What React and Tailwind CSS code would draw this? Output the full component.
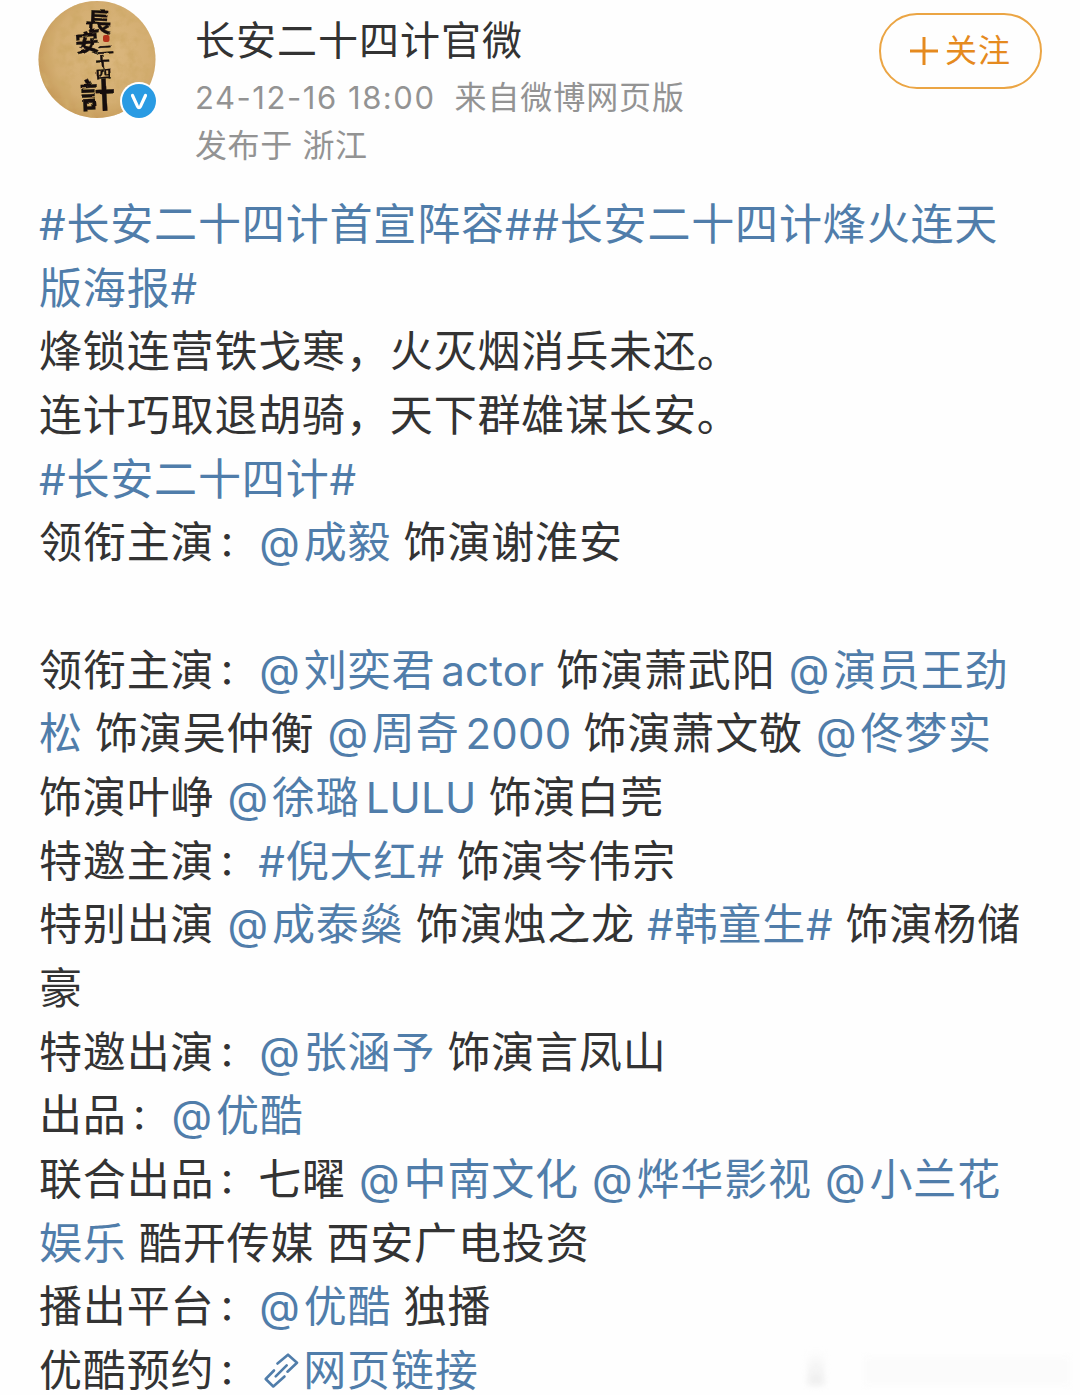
import React from "react";

const Avatar = () => {
  return (
    <div className="relative h-[118px] w-[118px] shrink-0">
      <svg viewBox="0 0 118 118" className="h-full w-full overflow-visible">
        <defs>
          <clipPath id="round">
            <circle cx="59" cy="59.5" r="58.5" />
          </clipPath>
          <radialGradient id="paper" cx="55%" cy="45%" r="60%">
            <stop offset="0" stopColor="#dcb981" />
            <stop offset="0.7" stopColor="#d4ae72" />
            <stop offset="1" stopColor="#c39654" />
          </radialGradient>
          {/* Parchment grain */}
          <filter id="grain" x="0" y="0" width="100%" height="100%">
            <feTurbulence type="fractalNoise" baseFrequency="0.09" numOctaves="5" seed="4" />
            <feColorMatrix values="0 0 0 0 0.62  0 0 0 0 0.4  0 0 0 0 0.14  2.2 0 0 0 -0.85" />
          </filter>
          {/* Rough edges for the brush lettering */}
          <filter id="brush" x="-10%" y="-10%" width="120%" height="120%">
            <feTurbulence type="fractalNoise" baseFrequency="0.1" numOctaves="1" seed="9" />
            <feDisplacementMap in="SourceGraphic" scale="3" xChannelSelector="R" yChannelSelector="G" />
          </filter>
        </defs>
        <g clipPath="url(#round)">
          <rect width="118" height="118" fill="url(#paper)" />
          <rect width="118" height="118" filter="url(#grain)" />
        </g>
        {/* Title lettering */}
        <g
          fill="#17100b"
          stroke="#17100b"
          filter="url(#brush)"
          className="font-['Noto_Sans_CJK_TC',sans-serif] font-bold"
        >
          <text fontSize="26" strokeWidth="0.3" transform="translate(47 31) rotate(3)">長</text>
          <text fontSize="24" strokeWidth="0.3" transform="translate(38 53) rotate(-6)">安</text>
          <text fontSize="17" strokeWidth="1" transform="translate(59 54) rotate(-4) scale(1 0.6)">二</text>
          <text fontSize="14" strokeWidth="0.5" transform="translate(58 67.500) rotate(-4)">十</text>
          <text fontSize="16" strokeWidth="0.2" transform="translate(58 79) rotate(-4) scale(1 0.75)">四</text>
          <text fontSize="35" strokeWidth="0.3" transform="translate(42 109) rotate(-3)">計</text>
        </g>
        <rect x="65" y="35" width="6.500" height="7" rx="2" fill="#b3311a" />
      </svg>
      {/* Verified badge */}
      <svg viewBox="0 0 38 38" className="absolute left-[82px] top-[82px] h-[38px] w-[38px]">
        <circle cx="19" cy="19" r="19" fill="#fff" />
        <circle cx="19" cy="19" r="17" fill="#2a9be3" />
        <path
          d="M12.500 13.5 L17.4 24.2 Q19 27 20.6 24.2 L25.500 13.5"
          fill="none"
          stroke="#fff"
          strokeWidth="3.2"
          strokeLinecap="round"
          strokeLinejoin="round"
        />
      </svg>
    </div>
  );
};

const Header = () => {
  return (
    <header className="flex h-[193px] items-start pl-[38px] pr-[38px]">
      <Avatar />
      <div className="ml-[39px] flex-1 whitespace-nowrap">
        <h1 className="mt-[12px] text-[40px] leading-[58px] tracking-[1px] text-[#333]">
          长安二十四计官微
        </h1>
        <p className="mt-[4px] text-[32px] leading-[48px] tracking-[0.9px] text-[#939393]">
          <span className="text-[31px] tracking-[1.55px]">24-12-16 18:00</span>
          <span className="ml-[19px]">来自微博网页版</span>
        </p>
        <p className="text-[32px] leading-[47px] tracking-[0.6px] text-[#939393]">
          发布于 浙江
        </p>
      </div>
      <button className="mt-[13px] flex h-[76px] w-[163px] items-center justify-center gap-[7px] rounded-full border-2 border-[#eba544] text-[32px] tracking-[1px] text-[#e58a1f]">
        <svg viewBox="0 0 28 28" className="h-7 w-7">
          <path d="M14 0 V28 M0 14 H28" stroke="currentColor" strokeWidth="3" />
        </svg>
        <span>关注</span>
      </button>
    </header>
  );
};

const Row = ({ children }) => (
  <p className="h-[63.66px] whitespace-nowrap">{children}</p>
);

const Link = ({ children }) => (
  <a href="#" className="text-[#507daa]">
    {children}
  </a>
);

// Latin letters and digits sit tighter than the Chinese text
const Latin = ({ children }) => (
  <span className="ml-[6px] text-[42px] tracking-[0.2px]">{children}</span>
);

const At = () => <span className="ml-[1px] mr-[3px] text-[42px]">@</span>;

const Hash = () => <span className="text-[42px] tracking-[0.8px]">#</span>;

// Smaller and raised a little so the dots are centred on the line
const Colon = () => (
  <span className="ml-[4px] mr-[5px] align-[2px] text-[34px] font-medium leading-none">：</span>
);

const LinkIcon = () => (
  <svg
    viewBox="0 0 36 36"
    className="ml-[5px] mr-[4px] inline-block h-9 w-9 align-[-3px]"
    fill="none"
    stroke="currentColor"
    strokeWidth="2.6"
    strokeLinecap="round"
    strokeLinejoin="round"
  >
    <path d="M14.500 10.500 L25 1.700 L34 9.700 L24.500 18.700" />
    <path d="M11 17.500 L2.700 26 L10.300 33.500 L21.500 23.500" />
    <path d="M12.700 23.300 L23.700 12.300" />
  </svg>
);

const Post = () => {
  return (
    <main className="pl-[39px] text-[43px] leading-[63.66px] tracking-[0.85px] [word-spacing:-0.8px] text-[#333]">
      <Row>
        <Link><Hash />长安二十四计首宣阵容<Hash /><Hash />长安二十四计烽火连天</Link>
      </Row>
      <Row>
        <Link>版海报<Hash /></Link>
      </Row>
      <Row>烽锁连营铁戈寒，火灭烟消兵未还。</Row>
      <Row>连计巧取退胡骑，天下群雄谋长安。</Row>
      <Row>
        <Link><Hash />长安二十四计<Hash /></Link>
      </Row>
      <Row>
        领衔主演<Colon /><Link><At />成毅</Link> 饰演谢淮安
      </Row>
      <Row />
      <Row>
        领衔主演<Colon /><Link><At />刘奕君<Latin>actor</Latin></Link> 饰演萧武阳 <Link><At />演员王劲</Link>
      </Row>
      <Row>
        <Link>松</Link> 饰演吴仲衡 <Link><At />周奇<Latin>2000</Latin></Link> 饰演萧文敬 <Link><At />佟梦实</Link>
      </Row>
      <Row>
        饰演叶峥 <Link><At />徐璐<Latin>LULU</Latin></Link> 饰演白莞
      </Row>
      <Row>
        特邀主演<Colon /><Link><Hash />倪大红<Hash /></Link> 饰演岑伟宗
      </Row>
      <Row>
        特别出演 <Link><At />成泰燊</Link> 饰演烛之龙 <Link><Hash />韩童生<Hash /></Link> 饰演杨储
      </Row>
      <Row>豪</Row>
      <Row>
        特邀出演<Colon /><Link><At />张涵予</Link> 饰演言凤山
      </Row>
      <Row>
        出品<Colon /><Link><At />优酷</Link>
      </Row>
      <Row>
        联合出品<Colon />七曜 <Link><At />中南文化</Link> <Link><At />烨华影视</Link> <Link><At />小兰花</Link>
      </Row>
      <Row>
        <Link>娱乐</Link> 酷开传媒 西安广电投资
      </Row>
      <Row>
        播出平台<Colon /><Link><At />优酷</Link> 独播
      </Row>
      <Row>
        优酷预约<Colon /><Link><LinkIcon />网页链接</Link>
      </Row>
    </main>
  );
};

const App = () => {
  return (
    <div className="relative h-[1395px] w-[1080px] overflow-hidden bg-[#fefefe] font-['Inter','Noto_Sans_CJK_SC',sans-serif]">
      <Header />
      <Post />
      {/* Faded mark in the corner */}
      <div className="absolute bottom-[10px] right-[10px] flex h-[34px] w-[262px] items-end gap-[40px] blur-[3px]">
        <div className="h-full w-4 bg-linear-to-b from-transparent to-[#ececec]" />
        <div className="h-7 flex-1 bg-[#fbfbfb]" />
      </div>
    </div>
  );
};

export default App;
